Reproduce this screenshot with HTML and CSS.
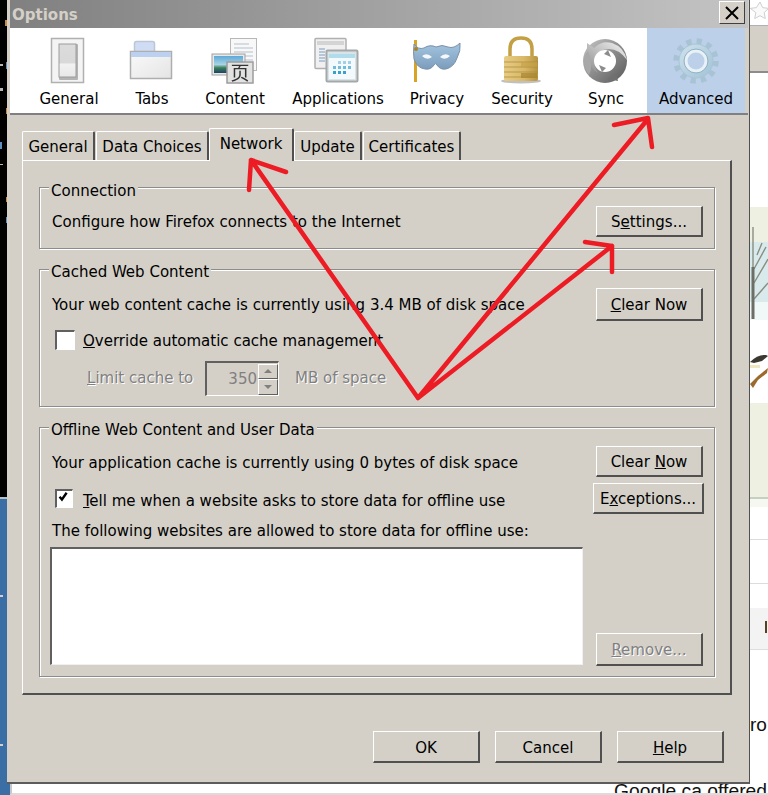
FILE: index.html
```html
<!DOCTYPE html>
<html lang="en">
<head>
<meta charset="utf-8">
<title>Options</title>
<link rel="stylesheet" href="styles.css">
</head>
<body>
<div class="desktop">
  <div class="rail">
    <div class="rail-code">
      <svg width="8" height="497" viewBox="0 0 8 497"><g fill="#c98a4a"><rect x="5" y="20" width="2" height="6"/><rect x="6" y="197" width="2" height="5"/><rect x="6" y="108" width="2" height="6"/></g><g fill="#5f8fc0"><rect x="6" y="62" width="2" height="7"/><rect x="0" y="142" width="2" height="7"/><rect x="6" y="217" width="2" height="6"/></g><g fill="#b8b8b8"><rect x="0" y="64" width="3" height="2"/><rect x="0" y="88" width="3" height="3"/><rect x="0" y="164" width="3" height="1"/></g></svg>
    </div>
    <div class="rail-blue"><i class="tick tick-a"></i><i class="tick tick-b"></i></div>
  </div>
  <div class="page">
    <div class="side">
      <div class="side-star"><svg width="18" height="25" viewBox="0 0 18 25"><path d="M10 2l2.6 5.6 6 .8-4.4 4.2 1.1 6-5.300-2.900-5.300 2.900 1.100-6L.4 8.400l6-.8z" fill="#fafafa" stroke="#cfcfcf"/></svg></div>
      <div class="side-band"></div>
      <div class="side-gap"></div>
      <svg class="side-pic" width="18" height="300" viewBox="0 0 18 300">
        <rect width="18" height="35" fill="#eef0e2"/>
        <rect y="35" width="18" height="60" fill="#d8eaec"/>
        <rect y="95" width="18" height="18" fill="#f1f8f8"/>
        <path d="M3 20v90M4 62L16 40M4 76L18 52M4 92L18 76M7 48L12 36" stroke="#8a8d80" stroke-width="1.400" fill="none"/>
        <path d="M3 60v52" stroke="#6c6f66" stroke-width="3"/>
        <path d="M0 155q8-8 16-7l2 1-6 5-8 2z" fill="#3c3830"/>
        <path d="M0 177l8-8 10-8-1 5-9 7-5 8z" fill="#9c6a2c"/>
        <rect y="158" width="10" height="3" fill="#f2e6c0"/>
        <rect y="196" width="18" height="95" fill="#eef0e2"/>
        <rect y="290" width="18" height="2" fill="#c4d0c0"/>
        <rect y="292" width="18" height="8" fill="#f6f7f0"/>
      </svg>
      <div class="side-rule side-rule-a"></div>
      <div class="side-rule side-rule-b"></div>
      <div class="side-box"><span class="side-box-mark"></span></div>
      <div class="side-text">ro</div>
    </div>
    <div class="bottom-strip">Google ca offered</div>
  </div>
</div>

<div class="dialog">
  <div class="titlebar">
    <span class="title">Options</span>
    <button class="close" type="button" aria-label="Close"><svg width="16" height="16" viewBox="0 0 16 16"><path d="M2 2l12 12M14 2L2 14" stroke="#000" stroke-width="2"/></svg></button>
  </div>

  <div class="toolbar">
    <div class="tile t-general">
      <svg class="ico" width="48" height="48" viewBox="0 0 48 48">
        <defs><linearGradient id="g1" x1="0" y1="0" x2="0" y2="1"><stop offset="0" stop-color="#dcdcdc"/><stop offset=".58" stop-color="#d8d8d8"/><stop offset=".6" stop-color="#f2f2f2"/><stop offset="1" stop-color="#e8e8e8"/></linearGradient></defs>
        <rect x="6.500" y="1.500" width="32" height="44" fill="#f4f4f4" stroke="#b0b0b0" stroke-width="1.500"/>
        <rect x="14" y="7" width="19" height="36" rx="1" fill="#b4b4b4"/>
        <rect x="14" y="7" width="17" height="33" fill="url(#g1)" stroke="#9c9c9c"/>
      </svg>
      <span class="tile-label">General</span>
    </div>
    <div class="tile t-tabs">
      <svg class="ico" width="48" height="48" viewBox="0 0 48 48">
        <defs><linearGradient id="g2" x1="0" y1="0" x2="1" y2="1"><stop offset="0" stop-color="#fafafa"/><stop offset="1" stop-color="#e4e4e4"/></linearGradient></defs>
        <path d="M6.500 15V6.500q0-2 2-2h16q2 0 2 2V15" fill="#cfdcf4" stroke="#bcc6d4" stroke-width="1.500"/>
        <rect x="2.500" y="14.500" width="41" height="27" fill="url(#g2)" stroke="#aeaeae" stroke-width="1.500"/>
        <rect x="3" y="15" width="40" height="5" fill="#bcd0f0"/>
      </svg>
      <span class="tile-label">Tabs</span>
    </div>
    <div class="tile t-content">
      <svg class="ico" width="48" height="48" viewBox="0 0 48 48">
        <defs><linearGradient id="g3" x1="0" y1="0" x2="0" y2="1"><stop offset="0" stop-color="#5ea8d8"/><stop offset=".5" stop-color="#a8d4e4"/><stop offset=".7" stop-color="#3c7c58"/><stop offset="1" stop-color="#1c4468"/></linearGradient></defs>
        <rect x="19.500" y="1.500" width="26" height="32" fill="#f8f8f8" stroke="#b8b8b8"/>
        <path d="M23 7h15M23 11h19M23 15h19M34 19h8M34 23h8" stroke="#b4c0cc"/>
        <rect x="1" y="17" width="33" height="21" fill="#e8e8e8" stroke="#a0a0a0"/>
        <rect x="3" y="19" width="29" height="17" fill="url(#g3)"/>
        <rect x="16" y="25" width="26" height="21" fill="#e2e2e2" stroke="#9c9c9c" stroke-width="1.500"/>
        <text class="ico-cjk" x="29" y="43" text-anchor="middle">页</text>
      </svg>
      <span class="tile-label">Content</span>
    </div>
    <div class="tile t-apps">
      <svg class="ico" width="48" height="48" viewBox="0 0 48 48">
        <rect x="1" y="1.500" width="31" height="30" rx="1" fill="#f0f0f0" stroke="#b0b0b0" stroke-width="1.500"/>
        <rect x="3" y="4" width="27" height="4" fill="#d4d4d4"/>
        <path d="M5 12h6M5 15h6M5 18h6M5 21h6M5 24h6" stroke="#7c9cc0"/>
        <rect x="12.500" y="13.500" width="31" height="31" rx="1" fill="#d8e4e8" stroke="#a4a8a8" stroke-width="2"/>
        <rect x="15" y="17" width="26" height="25" fill="#f4fafc"/>
        <rect x="15" y="17" width="26" height="4" fill="#b0dcec"/>
        <g fill="#3aa0cc"><rect x="24" y="24" width="3" height="3" opacity=".45"/><rect x="29" y="24" width="3" height="3" opacity=".45"/><rect x="34" y="24" width="3" height="3" opacity=".45"/><rect x="19" y="29" width="3" height="3" opacity=".7"/><rect x="24" y="29" width="3" height="3" opacity=".7"/><rect x="29" y="29" width="3" height="3" opacity=".7"/><rect x="34" y="29" width="3" height="3" opacity=".7"/><rect x="19" y="34" width="3" height="3"/><rect x="24" y="34" width="3" height="3"/><rect x="29" y="34" width="3" height="3"/></g>
      </svg>
      <span class="tile-label">Applications</span>
    </div>
    <div class="tile t-privacy">
      <svg class="ico" width="48" height="48" viewBox="0 0 48 48">
        <defs><linearGradient id="g4" x1="0" y1="0" x2="0" y2="1"><stop offset="0" stop-color="#a4c6e0"/><stop offset="1" stop-color="#7c9cbc"/></linearGradient></defs>
        <rect x="1" y="3" width="3" height="42" fill="#d8a428"/>
        <path d="M1 7q4 6 10 4 6-4 12-1 6-3 12 0 6 2 12-4 1 8-3 15-3 9-11 11-6 1-9-4-2-3-3 0-3 5-9 4-8-1-11-10Q0 15 1 7z" fill="url(#g4)" stroke="#7a90a8"/>
        <path d="M9 19q5-4 10 1-5 4-10-1zM27 20q5-5 10-1-5 5-10 1z" fill="#f4f8fa"/>
        <circle cx="3" cy="12" r="2" fill="#a88424"/>
      </svg>
      <span class="tile-label">Privacy</span>
    </div>
    <div class="tile t-security">
      <svg class="ico" width="48" height="48" viewBox="0 0 48 48">
        <defs><linearGradient id="g5" x1="0" y1="0" x2="1" y2="0"><stop offset="0" stop-color="#e8cc84"/><stop offset=".6" stop-color="#d8b868"/><stop offset="1" stop-color="#b89440"/></linearGradient></defs>
        <ellipse cx="23" cy="44" rx="20" ry="2.500" fill="#c0c0c0"/>
        <path d="M12 20V12Q12 1 23 1t11 11v8" fill="none" stroke="#c4a044" stroke-width="3.500"/>
        <rect x="6" y="19" width="34" height="25" rx="2" fill="url(#g5)"/>
        <path d="M6 25h34M6 30h34M6 35h34M6 40h34" stroke="#a88838" stroke-width="1.200" opacity=".7"/>
        <rect x="23" y="25" width="16" height="5" fill="#c4a044" opacity=".6"/><rect x="23" y="36" width="16" height="5" fill="#a88430" opacity=".7"/>
      </svg>
      <span class="tile-label">Security</span>
    </div>
    <div class="tile t-sync">
      <svg class="ico" width="48" height="48" viewBox="0 0 48 48">
        <defs><linearGradient id="g6" x1="0" y1="0" x2="1" y2="1"><stop offset="0" stop-color="#c8c8c8"/><stop offset=".5" stop-color="#8c8c8c"/><stop offset="1" stop-color="#585858"/></linearGradient><linearGradient id="g7" x1="0" y1="1" x2="1" y2="0"><stop offset="0" stop-color="#8c8c8c"/><stop offset="1" stop-color="#f4f4f4"/></linearGradient></defs>
        <circle cx="23" cy="24" r="22" fill="url(#g6)"/>
        <path d="M5 6l7 5q8-8 18-5 12 4 15 17-8-11-18-11-11 0-14 10-2 7 3 14Q4 30 5 6z" fill="url(#g7)"/>
        <path d="M2 22q1-5 4-8 6 14 1 24-6-8-5-16z" fill="#a8a8a8"/>
        <circle cx="23" cy="24" r="11" fill="#fff"/>
        <path d="M26 13l3 7-7-3zM20 35l-3-7 7 3z" fill="#8c8c8c"/>
        <path d="M36 44l-10-2 8-6z" fill="#707070"/>
      </svg>
      <span class="tile-label">Sync</span>
    </div>
    <div class="tile t-advanced">
      <svg class="ico" width="48" height="48" viewBox="0 0 48 48">
        <defs><linearGradient id="g8" x1="0" y1="0" x2="1" y2="1"><stop offset="0" stop-color="#d0e2ee"/><stop offset="1" stop-color="#a0c2d4"/></linearGradient></defs>
        <circle cx="24" cy="24" r="19.500" fill="none" stroke="#a8c4d4" stroke-width="6.500" stroke-dasharray="5.200 5.010"/>
        <circle cx="24" cy="24" r="17" fill="url(#g8)" stroke="#a8c4d4"/>
        <circle cx="24" cy="24" r="10" fill="#bdd0ea" stroke="#e8f2f6" stroke-width="3"/>
        <circle cx="24" cy="24" r="12" fill="none" stroke="#94b4c8"/>
      </svg>
      <span class="tile-label">Advanced</span>
    </div>
  </div>

  <div class="tabs">
    <div class="tab tab-general">General</div>
    <div class="tab tab-data">Data Choices</div>
    <div class="tab tab-network is-selected">Network</div>
    <div class="tab tab-update">Update</div>
    <div class="tab tab-certs">Certificates</div>
  </div>

  <div class="panel">
    <section class="group group-conn">
      <h3 class="legend">Connection</h3>
      <div class="row">
        <span>Configure how Firefox connects to the Internet</span>
        <button class="btn" type="button">S<u>e</u>ttings...</button>
      </div>
    </section>

    <section class="group group-cache">
      <h3 class="legend">Cached Web Content</h3>
      <div class="row">
        <span>Your web content cache is currently using 3.4 MB of disk space</span>
        <button class="btn btn-tall" type="button"><u>C</u>lear Now</button>
      </div>
      <label class="check-row check-row-a"><span class="check"></span><span><u>O</u>verride automatic cache management</span></label>
      <div class="limit-row">
        <span class="muted limit-label"><u>L</u>imit cache to</span>
        <div class="spin">
          <span class="spin-value">350</span>
          <div class="spin-btns">
            <span class="spin-btn"><i class="arrow-up"></i></span>
            <span class="spin-btn"><i class="arrow-down"></i></span>
          </div>
        </div>
        <span class="muted limit-unit">MB of space</span>
      </div>
    </section>

    <section class="group group-offline">
      <h3 class="legend">Offline Web Content and User Data</h3>
      <div class="row row-app">
        <span>Your application cache is currently using 0 bytes of disk space</span>
        <button class="btn" type="button">Clear <u>N</u>ow</button>
      </div>
      <div class="row row-ex">
        <label class="check-row check-row-b"><span class="check check-small"><svg width="11" height="11" viewBox="0 0 14 14"><path d="M2 6l3 3.500L11 1" fill="none" stroke="#000" stroke-width="3"/></svg></span><span><u>T</u>ell me when a website asks to store data for offline use</span></label>
        <button class="btn btn-wide" type="button">E<u>x</u>ceptions...</button>
      </div>
      <div class="sites-label">The following websites are allowed to store data for offline use:</div>
      <div class="row row-list">
        <div class="listbox"></div>
        <button class="btn btn-tall btn-off" type="button"><u>R</u>emove...</button>
      </div>
    </section>
  </div>

  <div class="footer">
    <button class="btn" type="button">OK</button>
    <button class="btn" type="button">Cancel</button>
    <button class="btn" type="button"><u>H</u>elp</button>
  </div>
</div>

<svg class="arrows" width="768" height="795" viewBox="0 0 768 795">
  <g fill="none" stroke="#ed1c24" stroke-width="4.500" stroke-linecap="round" stroke-linejoin="round">
    <path d="M286 172L251 160L249 190M251 160L418 398L648 119M614 125L648 118L652 147M418 398L612 246M585 242L612 246V272"/>
  </g>
</svg>
</body>
</html>
```
FILE: styles.css
```css
* { box-sizing: border-box; }
html, body { margin: 0; padding: 0; }
body {
  width: 768px;
  height: 795px;
  overflow: hidden;
  position: relative;
  background: #fff;
  font-family: "DejaVu Sans Condensed", "DejaVu Sans", sans-serif;
  font-size: 16.7px;
  color: #000;
}

/* what is behind the dialog */
.desktop { display: flex; height: 795px; }
.rail { width: 10px; display: flex; flex-direction: column; }
.rail-code { height: 497px; background: #000; line-height: 0; }
.rail-blue { flex: 1; background: #3a6ea5; border-top: 2px solid #b8c0c8; position: relative; }
.tick { position: absolute; left: 0; width: 3px; height: 2px; background: #d0d0d0; }
.tick-a { top: 96px; }
.tick-b { top: 245px; }
.page { flex: 1; display: flex; flex-direction: column; align-items: flex-end; }
.side { width: 18px; height: 782px; display: flex; flex-direction: column; overflow: hidden; }
.side-star { height: 25px; line-height: 0; }
.side-band { height: 48px; background: #d4d0c8; border-bottom: 2px solid #8c8c8c; border-top: 1px solid #b0b0b0; }
.side-gap { height: 134px; }
.side-pic { display: block; flex: none; }
.side-rule { height: 1px; background: #dcdcdc; }
.side-rule-a { margin-top: 32px; }
.side-rule-b { margin-top: 43px; }
.side-box { height: 42px; margin-top: 24px; background: #f3f3f3; border-bottom: 1px solid #dedede; position: relative; }
.side-box-mark { position: absolute; left: 15px; top: 13px; width: 2px; height: 12px; background: #5a4020; }
.side-text { margin-top: 64px; font: 19px/22px "Liberation Sans", sans-serif; color: #111; }
.bottom-strip {
  width: 758px;
  height: 13px;
  overflow: hidden;
  text-align: right;
  padding-right: 1px;
  font: 19.300px/19px "Liberation Sans", sans-serif;
  color: #111;
  background: #fff;
  border-left: 2px solid #c8c8c8;
  border-bottom: 2px solid #dcdcdc;
}

/* dialog window */
.dialog {
  position: absolute;
  left: 7px;
  top: 0;
  width: 743px;
  height: 784px;
  padding-left: 3px;
  background: #d4d0c8;
  border-right: 1px solid #505050;
  border-bottom: 2px solid #5c5c5c;
}
.titlebar {
  height: 28px;
  width: 738px;
  display: flex;
  align-items: center;
  justify-content: space-between;
  padding: 0 3px 0 2px;
  background: linear-gradient(90deg, #808080, #c4c4c4);
}
.title { font-weight: bold; font-size: 16.7px; color: #d4d0c8; }
.close {
  width: 26px;
  height: 23px;
  margin-top: -3px;
  padding: 0;
  display: flex;
  align-items: center;
  justify-content: center;
  background: #d4d0c8;
  border: 1px solid;
  border-color: #fff #404040 #404040 #fff;
}

.toolbar {
  width: 738px;
  height: 87px;
  padding-left: 13px;
  display: flex;
  background: linear-gradient(90deg, #fff 735px, #d4d0c8 735px);
  border-bottom: 2px solid #808080;
}
.tile { display: flex; flex-direction: column; align-items: center; padding-top: 9px; }
.tile-label { margin-top: 3px; line-height: 20px; white-space: nowrap; }
.ico { display: block; overflow: visible; filter: blur(.35px); }
.ico-cjk { font-family: "Noto Sans CJK SC", sans-serif; font-size: 19px; fill: #333; }
.t-general { width: 92px; }
.t-tabs { width: 74px; }
.t-content { width: 92px; }
.t-apps { width: 114px; }
.t-privacy { width: 84px; }
.t-security { width: 86px; }
.t-sync { width: 82px; }
.t-advanced { width: 98px; background: #bdd0ea; }

.tabs { display: flex; align-items: flex-end; height: 45px; margin-left: 12px; position: relative; z-index: 1; }
.tab {
  height: 29px;
  display: flex;
  align-items: center;
  justify-content: center;
  margin-right: 1px;
  white-space: nowrap;
  border-left: 1px solid #fff;
  border-top: 1px solid #fff;
  border-right: 2px solid #505050;
  border-radius: 2px 2px 0 0;
}
.tab-general { width: 73px; }
.tab-data { width: 113px; }
.tab-network { width: 85px; margin-right: 0; height: 33px; margin-bottom: -1px; margin-left: -1px; background: #d4d0c8; padding-bottom: 4px; }
.tab-update { width: 68px; }
.tab-certs { width: 98px; }

.panel {
  width: 710px;
  height: 535px;
  margin-left: 12px;
  padding: 26px 15px 0 16px;
  display: flex;
  flex-direction: column;
  gap: 20px;
  border: 1px solid;
  border-color: #fff #505050 #505050 #fff;
  border-width: 1px 2px 2px 1px;
}

.group {
  position: relative;
  border: 1px solid #8c8c8c;
  box-shadow: 1px 1px 0 #fff, inset 1px 1px 0 #fff;
  padding: 18px 11px 0 12px;
}
.group-conn { height: 62px; }
.group-cache { height: 138px; }
.group-offline { height: 250px; }
.legend {
  position: absolute;
  left: 9px;
  top: -9px;
  margin: 0;
  padding: 0 2px;
  font-size: 16.7px;
  font-weight: normal;
  line-height: 20px;
  background: #d4d0c8;
}
.group-conn .legend { top: -8px; }
.row { display: flex; align-items: center; justify-content: space-between; }
.row > span { padding-bottom: 2px; }
.row-app > span { padding-top: 1px; padding-bottom: 0; }
.row-ex { margin-top: 6px; }
.row-list { align-items: flex-end; margin-top: 7px; }

.btn {
  width: 107px;
  height: 31px;
  padding: 0;
  font: inherit;
  color: #000;
  background: #d4d0c8;
  border: 1px solid;
  border-color: #fff #505050 #505050 #fff;
  border-width: 1px 2px 2px 1px;
}
.btn-tall { height: 33px; }
.btn-wide { width: 111px; margin-right: -1px; }
.btn-off { color: #808080; text-shadow: 1px 1px 0 #fff; margin-bottom: -1px; }

.check-row { display: flex; align-items: center; gap: 8px; padding-left: 3px; }
.check-row-a { margin-top: 9px; height: 20px; }
.check-row-b { padding-top: 3px; }
.check {
  width: 20px;
  height: 20px;
  flex: none;
  display: flex;
  align-items: flex-start;
  justify-content: flex-start;
  background: #fff;
  border: 1px solid;
  border-color: #606060 #fff #fff #606060;
  border-width: 2px 1px 1px 2px;
  line-height: 0;
}
.check-small { width: 18px; height: 19px; margin-right: 2px; padding: 1px 0 0 1px; margin-top: -4px; }
.limit-row { display: flex; align-items: center; margin-top: 11px; padding-left: 35px; height: 35px; }
.muted { color: #808080; text-shadow: 1px 1px 0 #fff; white-space: nowrap; }
.limit-label { width: 118px; padding-bottom: 3px; }
.limit-unit { padding-bottom: 3px; }
.spin {
  width: 74px;
  height: 35px;
  margin-right: 16px;
  display: flex;
  align-items: center;
  justify-content: flex-end;
  border: 1px solid;
  border-color: #606060 #fff #fff #606060;
  border-width: 2px 1px 1px 2px;
  color: #808080;
}
.spin-value { margin-right: 1px; padding-bottom: 3px; }
.spin-btns { width: 20px; display: flex; flex-direction: column; height: 31px; }
.spin-btn {
  flex: 1;
  display: flex;
  align-items: center;
  justify-content: center;
  border: 1px solid;
  border-color: #fff #606060 #606060 #fff;
}
.arrow-up { border: 4px solid transparent; border-top: 0; border-bottom: 4px solid #808080; }
.arrow-down { border: 4px solid transparent; border-bottom: 0; border-top: 4px solid #808080; }

.sites-label { margin-top: 6px; line-height: 20px; }
.listbox {
  width: 533px;
  height: 118px;
  margin-left: -2px;
  background: #fff;
  border: 1px solid;
  border-color: #606060 #f0f0f0 #f0f0f0 #606060;
  border-width: 2px 1px 1px 2px;
}

.footer {
  width: 738px;
  margin-top: 36px;
  padding-right: 24px;
  display: flex;
  justify-content: flex-end;
  gap: 15px;
}
.footer .btn { height: 32px; }

/* red annotation drawn on top of the screenshot */
.arrows { position: absolute; left: 0; top: 0; pointer-events: none; z-index: 5; }
```
